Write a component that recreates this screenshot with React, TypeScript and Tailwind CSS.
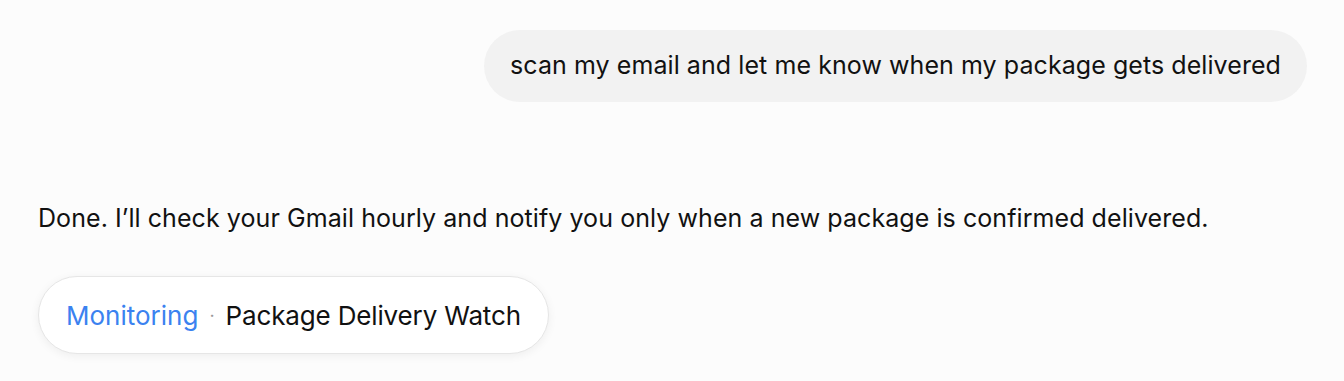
export default function App() {
  return (
    <div className="h-[381px] w-[1344px] bg-[#fcfcfc] font-['Inter',sans-serif] text-[#111111] overflow-hidden">
      <div className="flex justify-end pt-[30px] pr-[37px]">
        <div className="flex h-[72px] items-center rounded-full bg-[#f2f2f2] px-[26px] text-[25px] tracking-[0.07px]">
          scan my email and let me know when my package gets delivered
        </div>
      </div>
      <div className="pl-[38px] pt-[100px]">
        <p className="text-[25px] leading-[32px] tracking-[0.07px]">
          Done. I’ll check your Gmail hourly and notify you only when a new package is confirmed delivered.
        </p>
        <div className="mt-[42px] inline-flex h-[78px] items-center gap-[11px] rounded-full border border-[#e6e6e6] bg-white px-[27px] text-[26px] shadow-[0_2px_10px_rgba(0,0,0,0.06)]">
          <span className="text-[#3b82f0]">Monitoring</span>
          <span className="text-[#9a9a9a] text-[18px]">·</span>
          <span className="tracking-[-0.15px]">Package Delivery Watch</span>
        </div>
      </div>
    </div>
  );
}
